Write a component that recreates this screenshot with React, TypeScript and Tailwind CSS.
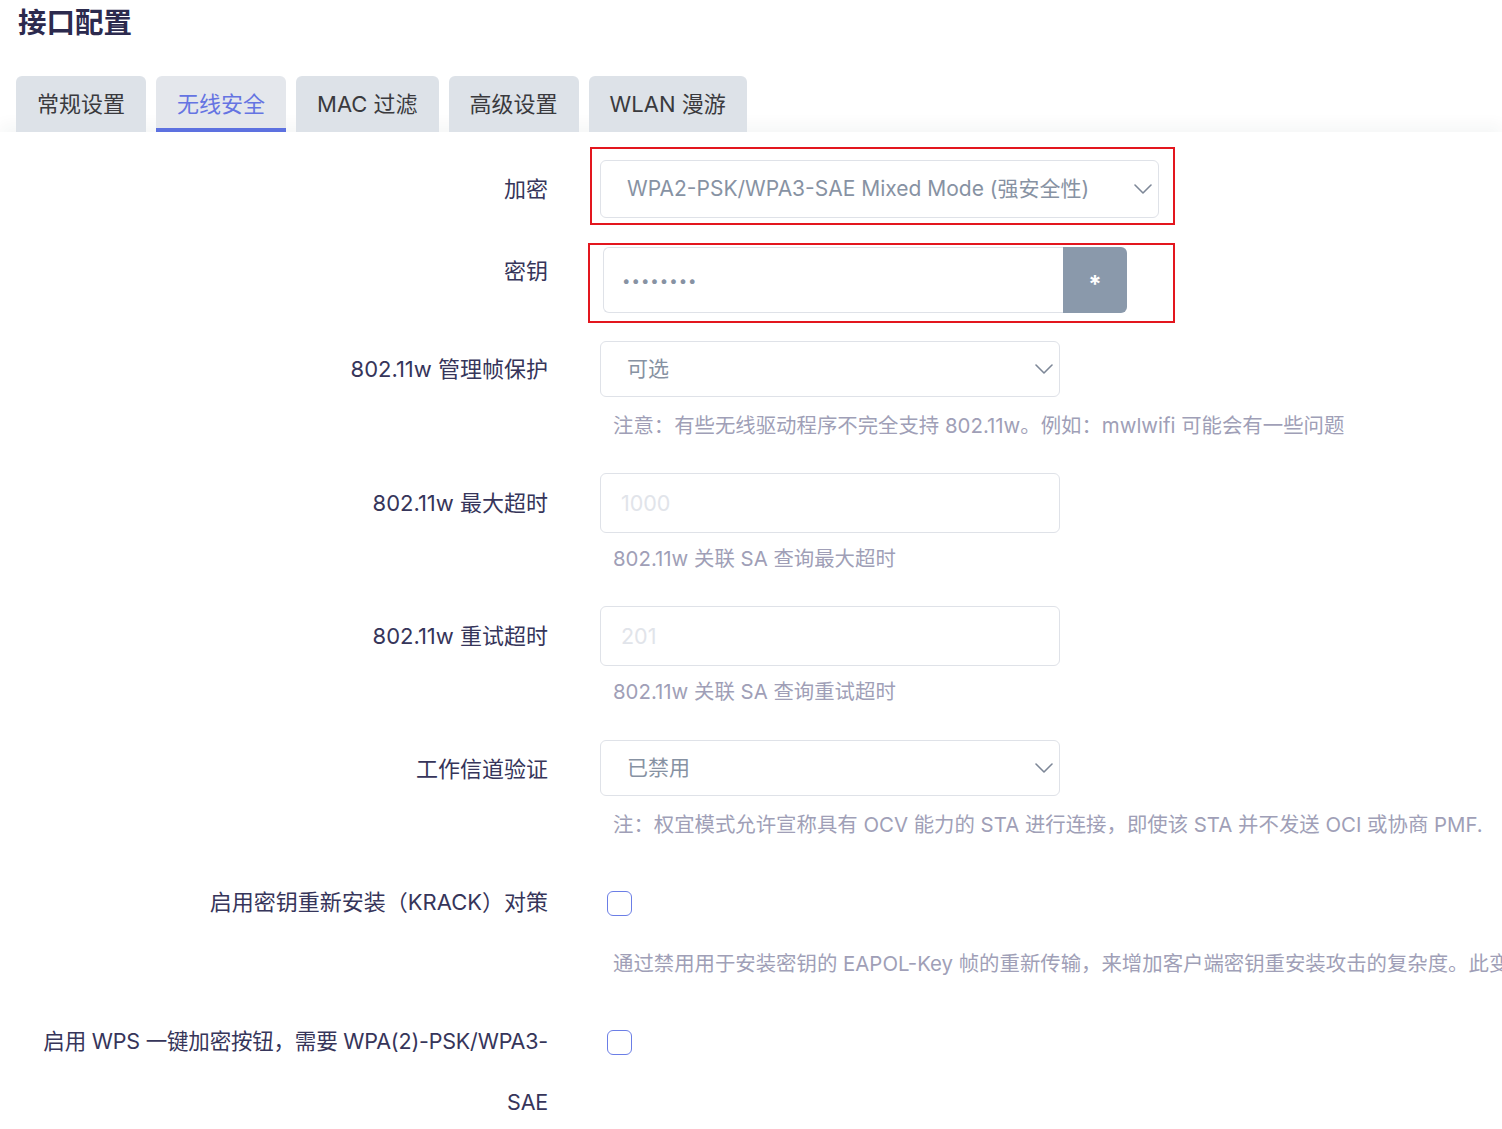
import React from 'react';

const font = { fontFamily: '"Inter", "Noto Sans CJK SC", sans-serif' };

const tabs = ['常规设置', '无线安全', 'MAC 过滤', '高级设置', 'WLAN 漫游'];

const Chevron = () => (
    <svg width="18" height="10" viewBox="0 0 18 10" fill="none" className="shrink-0">
        <polyline points="1,1 9,9 17,1" stroke="#7d8797" strokeWidth="1.6" strokeLinecap="round" strokeLinejoin="round" />
    </svg>
);

const Select = ({ value, wide }: { value: string; wide?: boolean }) => (
    <div
        className={`flex items-center justify-between rounded-md border border-[#dfe2e8] bg-white pl-[26px] pr-[6px] ${wide ? 'w-[559px] h-[58px]' : 'w-[460px] h-[56px]'}`}
    >
        <span className="text-[21px] text-[#8792a3]">{value}</span>
        <Chevron />
    </div>
);

const Label = ({ children, pt }: { children: React.ReactNode; pt: string }) => (
    <div className={`w-[548px] shrink-0 pl-[38px] text-right text-[22px] leading-[30px] text-[#36355a] ${pt}`}>
        {children}
    </div>
);

const Desc = ({ children, mt }: { children: React.ReactNode; mt: string }) => (
    <div className={`pl-[13px] whitespace-nowrap text-[20.4px] leading-[30px] text-[#a09fb7] ${mt}`}>{children}</div>
);

const NumInput = ({ placeholder }: { placeholder: string }) => (
    <input
        readOnly
        placeholder={placeholder}
        className="w-[460px] h-[60px] rounded-md border border-[#dfe2e8] bg-white px-[20px] text-[21.5px] outline-none placeholder:text-[#e1e4ea]"
        style={font}
    />
);

const Checkbox = ({ mt }: { mt: string }) => (
    <div className={`ml-[7px] h-[25px] w-[25px] rounded-[6px] border-[1.5px] border-[#6b7ee6] bg-white ${mt}`} />
);

export default function App() {
    return (
        <div className="relative h-[1129px] w-[1502px] overflow-hidden bg-white" style={font}>
            <h1 className="pl-[18px] pt-[6px] text-[28.5px] font-bold leading-[34px] text-[#2c2a4e]">接口配置</h1>

            {/* tabs */}
            <div className="relative z-10 mt-[36px] flex gap-[10px] pl-[16px]">
                {tabs.map((t, i) => (
                    <div
                        key={t}
                        className={`relative flex h-[56px] items-center rounded-t-[6px] px-[21px] text-[22px] ${i === 1 ? 'bg-[#e4e7ec] text-[#6574e2]' : 'bg-[#dde2e8] text-[#3a3a3e]'}`}
                    >
                        {t}
                        {i === 1 && <div className="absolute bottom-0 left-0 right-0 h-[4px] bg-[#5d71e0]" />}
                    </div>
                ))}
            </div>

            {/* panel */}
            <div className="shadow-[0_-8px_14px_rgba(30,40,60,0.04)] bg-white pt-[15px]">
                {/* 加密 */}
                <div className="flex items-start">
                    <Label pt="pt-[27px]">加密</Label>
                    <div className="ml-[42px] w-[585px] border-2 border-[#e3161e] pb-[5px] pl-[8px] pt-[11px]">
                        <Select value="WPA2-PSK/WPA3-SAE Mixed Mode (强安全性)" wide />
                    </div>
                </div>

                {/* 密钥 */}
                <div className="mt-[18px] flex items-start">
                    <Label pt="pt-[13px]">密钥</Label>
                    <div className="ml-[40px] w-[587px] border-2 border-[#e3161e] pb-[8px] pl-[13px] pt-[2px]">
                        <div className="flex h-[66px] w-[524px]">
                            <input
                                type="password"
                                readOnly
                                defaultValue="12345678"
                                className="h-full flex-1 rounded-l-md border border-r-0 border-[#dfe2e8] bg-white pl-[18px] text-[15px] tracking-[1px] text-[#8792a3] outline-none"
                            />
                            <div className="flex h-full w-[64px] items-center justify-center rounded-r-md bg-[#8a99ab] text-[24px] font-bold text-white">
                                <span className="mt-[10px]">*</span>
                            </div>
                        </div>
                    </div>
                </div>

                {/* 管理帧保护 */}
                <div className="mt-[18px] flex items-start">
                    <Label pt="pt-[13px]">802.11w 管理帧保护</Label>
                    <div className="ml-[52px]">
                        <Select value="可选" />
                        <Desc mt="mt-[14px]">注意：有些无线驱动程序不完全支持 802.11w。例如：mwlwifi 可能会有一些问题</Desc>
                    </div>
                </div>

                {/* 最大超时 */}
                <div className="mt-[32px] flex items-start">
                    <Label pt="pt-[15px]">802.11w 最大超时</Label>
                    <div className="ml-[52px]">
                        <NumInput placeholder="1000" />
                        <Desc mt="mt-[11px]">802.11w 关联 SA 查询最大超时</Desc>
                    </div>
                </div>

                {/* 重试超时 */}
                <div className="mt-[32px] flex items-start">
                    <Label pt="pt-[15px]">802.11w 重试超时</Label>
                    <div className="ml-[52px]">
                        <NumInput placeholder="201" />
                        <Desc mt="mt-[11px]">802.11w 关联 SA 查询重试超时</Desc>
                    </div>
                </div>

                {/* 工作信道验证 */}
                <div className="mt-[33px] flex items-start">
                    <Label pt="pt-[14px]">工作信道验证</Label>
                    <div className="ml-[52px]">
                        <Select value="已禁用" />
                        <Desc mt="mt-[14px]">注：权宜模式允许宣称具有 OCV 能力的 STA 进行连接，即使该 STA 并不发送 OCI 或协商 PMF.</Desc>
                    </div>
                </div>

                {/* KRACK */}
                <div className="mt-[47px] flex items-start">
                    <Label pt="pt-0">启用密钥重新安装（KRACK）对策</Label>
                    <div className="ml-[52px]">
                        <Checkbox mt="mt-[4px]" />
                        <Desc mt="mt-[33px]">
                            通过禁用用于安装密钥的 EAPOL-Key 帧的重新传输，来增加客户端密钥重安装攻击的复杂度。此变通方法可能会导致互操作性问题，并降低密钥协商的可靠性。
                        </Desc>
                    </div>
                </div>

                {/* WPS */}
                <div className="mt-[32px] flex items-start">
                    <div className="w-[548px] shrink-0 whitespace-nowrap text-right text-[21.5px] leading-[61px] tracking-[-0.2px] text-[#36355a]">
                        启用 WPS 一键加密按钮，需要 WPA(2)-PSK/WPA3-
                        <br />
                        SAE
                    </div>
                    <div className="ml-[52px]">
                        <Checkbox mt="mt-[19px]" />
                    </div>
                </div>
            </div>
        </div>
    );
}
